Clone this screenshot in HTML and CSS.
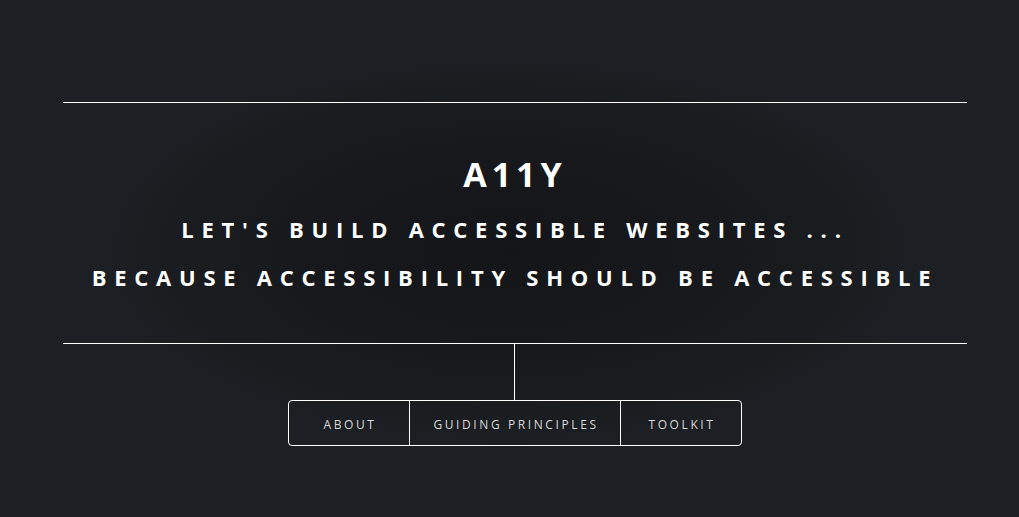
FILE: index.html
```html
<!DOCTYPE html>
<html lang="en">
<head>
<meta charset="utf-8">
<title>A11Y</title>
<link rel="stylesheet" href="styles.css">
</head>
<body>
<div class="page">
  <header class="hero">
    <h1 class="title">A11Y</h1>
    <p class="tagline">Let's build accessible websites ...</p>
    <p class="tagline">because accessibility should be accessible</p>
  </header>
  <div class="connector"></div>
  <nav class="menu">
    <a class="menu-item" href="#about">About</a>
    <a class="menu-item wide" href="#principles">Guiding Principles</a>
    <a class="menu-item" href="#toolkit">Toolkit</a>
  </nav>
</div>
</body>
</html>
```
FILE: styles.css
```css
html, body {
  margin: 0;
  padding: 0;
  height: 100%;
}
body {
  background: radial-gradient(ellipse 420px 200px at 50% 250px, #141518 0%, #17191c 50%, #1c1f23 100%), #1c1f23;
  color: #fff;
  font-family: "Open Sans", "Noto Sans", sans-serif;
}
.page {
  padding: 102px 52px 0 63px;
  display: flex;
  flex-direction: column;
  align-items: center;
}
.hero {
  align-self: stretch;
  border-top: 1px solid #fff;
  border-bottom: 1px solid #fff;
  padding: 48px 0 42px;
  text-align: center;
}
.title {
  margin: 0 0 8px;
  font-size: 34px;
  font-weight: 700;
  letter-spacing: 5px;
  line-height: 46px;
}
.tagline {
  margin: 0;
  font-size: 22px;
  font-weight: 700;
  letter-spacing: 7.75px;
  line-height: 48px;
  text-transform: uppercase;
}
.connector {
  width: 1px;
  height: 56px;
  background: #fff;
  margin-right: 1px;
}
.menu {
  display: flex;
  border: 1px solid #fff;
  border-radius: 4px;
}
.menu-item {
  display: block;
  width: 120px;
  text-align: center;
  color: #d8d8d8;
  text-decoration: none;
  text-transform: uppercase;
  font-size: 12px;
  letter-spacing: 2.6px;
  line-height: 41px;
  padding: 3px 0 0 2px;
  box-sizing: border-box;
}
.menu-item.wide {
  width: 211px;
  border-left: 1px solid #fff;
}
.menu-item.wide + .menu-item {
  width: 121px;
  border-left: 1px solid #fff;
}
```
